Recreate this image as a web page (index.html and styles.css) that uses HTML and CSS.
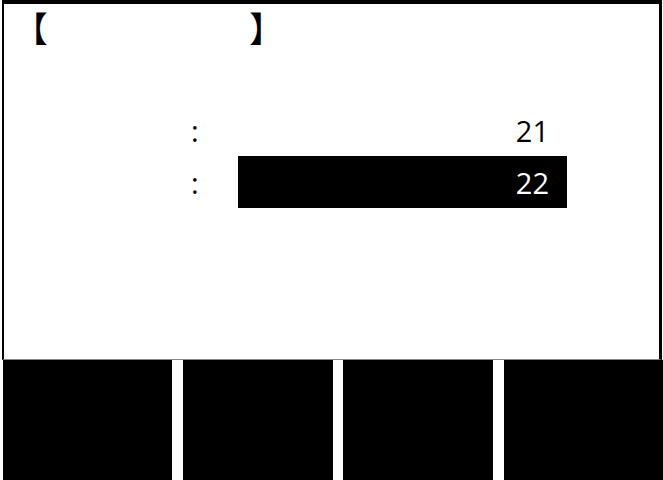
FILE: index.html
```html
<!DOCTYPE html>
<html lang="ja">
<head>
<meta charset="utf-8">
<title>Screen</title>
<link rel="stylesheet" href="styles.css">
</head>
<body>
<div class="screen">
  <div class="title"><span class="bracket">【</span><span class="title-text"></span><span class="bracket">】</span></div>
  <div class="rows">
    <div class="row">
      <span class="label"></span>
      <span class="colon">:</span>
      <span class="value">21</span>
    </div>
    <div class="row">
      <span class="label"></span>
      <span class="colon">:</span>
      <span class="value selected">22</span>
    </div>
  </div>
</div>
<div class="softkeys">
  <div class="key"></div>
  <div class="key"></div>
  <div class="key"></div>
  <div class="key"></div>
</div>
</body>
</html>
```

FILE: styles.css
```css
html, body {
  margin: 0;
  padding: 0;
  background: #fff;
  width: 663px;
  height: 480px;
  overflow: hidden;
  font-family: "Open Sans", "Noto Sans CJK JP", sans-serif;
  color: #000;
}

.screen {
  box-sizing: border-box;
  height: 360px;
  margin: 0 1px 0 2px;
  border-top: 4px solid #000;
  border-left: 2px solid #000;
  border-right: 3px solid #000;
  border-bottom: 1px solid #888;
}

.title {
  display: flex;
  align-items: center;
  height: 44px;
  padding-left: 9px;
  font-size: 35px;
  line-height: 1;
  font-family: "Noto Sans CJK JP", sans-serif;
}

.title-text {
  width: 201px;
}

.rows {
  margin-top: 56px;
  display: flex;
  flex-direction: column;
}

.row {
  display: grid;
  grid-template-columns: 187px 47px 329px;
  height: 52px;
  align-items: stretch;
  font-size: 29px;
}

.colon {
  display: flex;
  align-items: center;
}

.value {
  display: flex;
  align-items: center;
  justify-content: flex-end;
  padding-right: 18px;
}

.value.selected {
  background: #000;
  color: #fff;
}

.softkeys {
  display: grid;
  grid-template-columns: 169px 150px 150px 1fr;
  column-gap: 10.5px;
  padding-left: 3px;
  height: 120px;
}

.key {
  background: #000;
}
```
